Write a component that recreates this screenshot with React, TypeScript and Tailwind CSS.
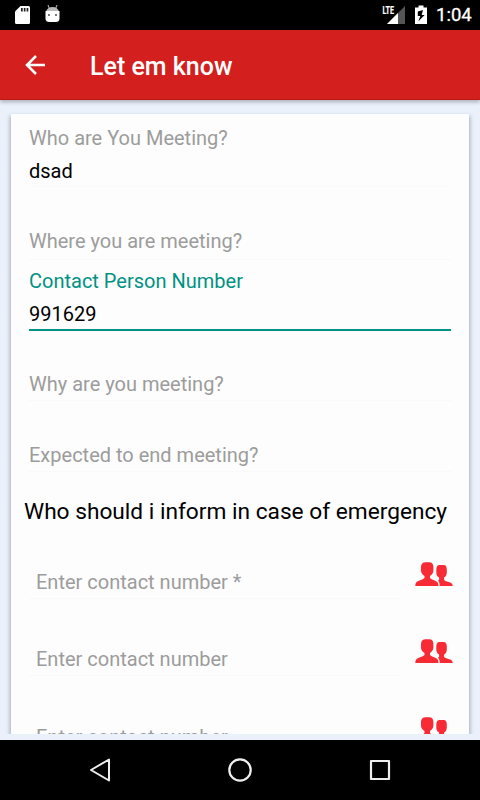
import React from "react";

function PeopleIcon() {
  return (
    <svg className="block h-[26px] w-[40px] shrink-0" viewBox="0 0 40 26" fill="#f82b35">
      <path d="M25.500 3h4.200c2.200 0 3.100 2 3.100 4.500v3.300c0 2.300-1.200 3.800-2.700 4.700v2.400c1 1 3 1.500 5.300 2.300 1.900.7 3.300 1.500 3.300 3.800H25.700c0-2.600-.5-4.200-1.700-5.200l1.100-1v-2.300c-1.600-.9-2.800-2.400-2.800-4.700V7.500C22.300 5 23.300 3 25.500 3z" />
      <path d="M11.500.3h3.700c2.800 0 4.200 2 4.200 4.700v3.500c0 2.700-1.600 4.500-3.400 5.400v2.200c1 1.200 3 1.900 5.100 2.600 2.400.9 3.400 2.300 3.400 5.300H1.300c0-3 1.100-4.400 3.700-5.300 2.300-.7 4.500-1.400 5.500-2.600v-2.200C8.600 13 7 11.200 7 8.500V5C7 2.300 8.700.3 11.500.3z" />
    </svg>
  );
}

function StatusBar() {
  return (
    <div className="flex h-[30px] shrink-0 items-center bg-black pr-[10px] pl-[15px] text-white">
      <svg className="h-[30px] w-[15px]" viewBox="0 0 15 30">
        <path d="M5.500 6H13.500Q15 6 15 7.500V22.500Q15 24 13.500 24H1.500Q0 24 0 22.500V11.500z" fill="#fff" />
        <path d="M6 8h1.700v3.500H6zM8.800 8h1.700v3.500H8.800zM11.600 8h1.700v3.500h-1.700z" fill="#222" />
      </svg>
      <svg className="ml-[15px] h-[30px] w-[15px]" viewBox="0 0 15 30">
        <path d="M3 5l1.500 4M12 5l-1.500 4" stroke="#aaa" strokeWidth="1.100" />
        <path d="M1 11.500Q2.500 7 7.500 7T14 11.500z" fill="#bbb" />
        <path d="M.5 11h14v7.500q0 3.500-4 3.500h-6q-4 0-4-3.500z" fill="#fff" />
        <path d="M3 14h2v2H3zM10 14h2v2h-2z" fill="#777" />
      </svg>
      <svg className="ml-auto h-[30px] w-[24px]" viewBox="0 0 24 30">
        <path d="M23 6v18H5z" fill="#555" />
        <path d="M16 13v11H5z" fill="#fff" />
        <text x="0.500" y="14" fill="#fff" stroke="#fff" strokeWidth="0.200" fontFamily="Roboto, sans-serif" fontSize="10.500" fontWeight="700" textLength="11.500" lengthAdjust="spacingAndGlyphs">LTE</text>
      </svg>
      <svg className="ml-[9px] h-[30px] w-[12px]" viewBox="0 0 12 30">
        <path d="M3.500 5.500h5v2H12V24H0V7.500h3.500z" fill="#fff" />
        <path d="M8 10L2.800 11.500V16h2.500l-2 5.500L9.600 15H6.700z" fill="#000" />
      </svg>
      <span className="ml-[9px] w-[34px] text-[18.500px] leading-[30px] font-normal whitespace-nowrap [-webkit-text-stroke:0.300px_#fff]">1:04</span>
    </div>
  );
}

function ContactRow({ label }: { label: string }) {
  return (
    <div className="flex h-[77px] items-start pr-[15px] pl-[18px] last:mt-[1px]">
      <div className="mt-[8px] h-[29px] w-[372px] border-b border-[#f9f9f9] pl-[7px] text-[#9c9c9c]">{label}</div>
      <div className="ml-auto"><PeopleIcon /></div>
    </div>
  );
}

export default function App() {
  return (
    <div className="flex h-[800px] w-[480px] flex-col overflow-hidden bg-[#eaf1fa] font-['Roboto',sans-serif] text-[20px] leading-[24px] text-black">
      <StatusBar />
      <header className="z-10 flex h-[70px] shrink-0 items-center border-b border-[#bd1717] bg-[#d3201f] pl-[25px] text-white shadow-[0_2px_4px_rgba(0,0,0,0.28)]">
        <svg className="h-[20px] w-[20px]" viewBox="0 0 20 20" fill="none" stroke="#fff" strokeWidth="2.500">
          <path d="M20 10H2M11 1L2 10L11 19" />
        </svg>
        <h1 className="ml-[45px] pt-[5px] text-[25px] leading-[30px] font-medium whitespace-nowrap">Let em know</h1>
      </header>
      <main className="mt-[14px] h-[620px] shrink-0 px-[11px] [clip-path:inset(-2px_0_0_0)]">
        <section className="h-[660px] bg-[#fdfdfd] pt-[12px] whitespace-nowrap shadow-[0_3px_4px_1px_rgba(65,70,95,0.4)]">
          <div className="px-[18px]">
            <div className="text-[#9c9c9c]">Who are You Meeting?</div>
            <div className="mt-[9px] h-[28px] border-b border-[#fafafa]">dsad</div>
            <div className="mt-[42px] h-[31px] border-b border-[#f9f9f9] text-[#9c9c9c]">Where you are meeting?</div>
            <div className="mt-[9px] text-[#009284]">Contact Person Number</div>
            <div className="mt-[9px] h-[29px] border-b-2 border-[#009284]">991629</div>
            <div className="mt-[41px] h-[29px] border-b border-[#f9f9f9] text-[#9c9c9c]">Why are you meeting?</div>
            <div className="mt-[42px] h-[29px] border-b border-[#f9f9f9] text-[#9c9c9c]">Expected to end meeting?</div>
          </div>
          <h2 className="mt-[26px] ml-[13px] h-[64px] text-[22.700px] leading-[28px] font-normal">Who should i inform in case of emergency</h2>
          <ContactRow label="Enter contact number *" />
          <ContactRow label="Enter contact number" />
          <ContactRow label="Enter contact number" />
        </section>
      </main>
      <nav className="mt-auto flex h-[60px] shrink-0 items-center justify-between bg-black px-[88px]">
        <svg className="h-[28px] w-[24px]" viewBox="0 0 24 28" fill="none" stroke="#eee" strokeWidth="2" strokeLinejoin="round"><path d="M21 3.500V24.500L3 14z" /></svg>
        <svg className="h-[28px] w-[24px]" viewBox="0 0 24 28" fill="none" stroke="#eee" strokeWidth="2.200"><circle cx="12" cy="14" r="10.700" /></svg>
        <svg className="h-[28px] w-[24px]" viewBox="0 0 24 28" fill="none" stroke="#eee" strokeWidth="2.200" strokeLinejoin="round"><rect x="3" y="5" width="18" height="18" /></svg>
      </nav>
    </div>
  );
}
